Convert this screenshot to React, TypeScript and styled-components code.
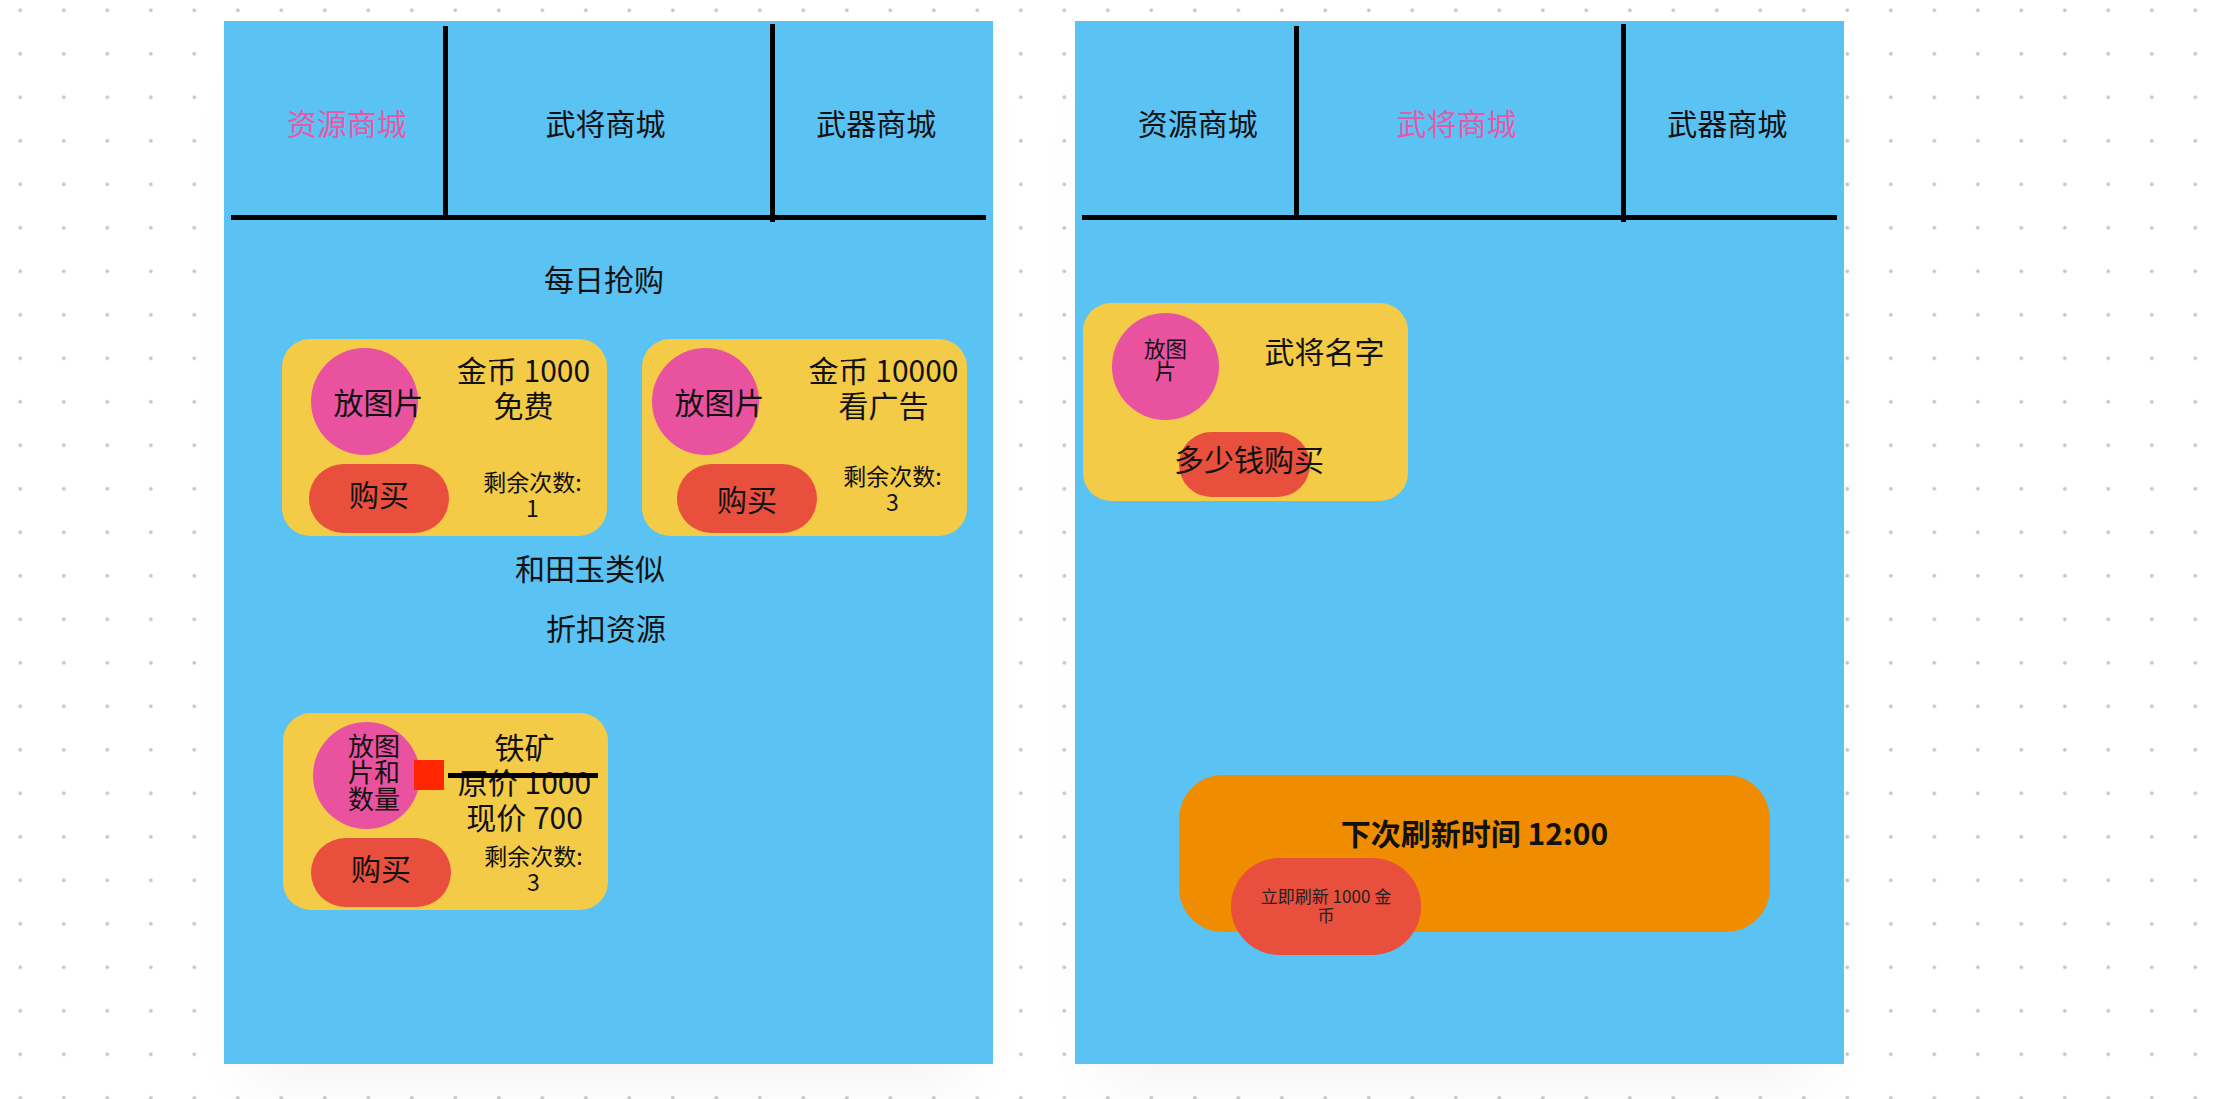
import React from 'react';
import styled, { createGlobalStyle } from 'styled-components';

const GlobalStyle = createGlobalStyle`
  html, body {
    margin: 0;
    padding: 0;
  }
  body {
    width: 2224px;
    height: 1099px;
    overflow: hidden;
    background-color: #ffffff;
    background-image: radial-gradient(circle, #c6c6c6 1.4px, transparent 2.2px);
    background-size: 43.5px 43.5px;
    background-position: -1.45px -11.45px;
    font-family: 'Noto Sans CJK SC', 'Noto Sans', sans-serif;
    color: #111;
  }
`;

const Page = styled.div`
  display: flex;
  gap: 82px;
  padding: 21px 0 0 224px;
`;

const Panel = styled.div`
  width: 769px;
  height: 1043px;
  flex: none;
  background: #5bc2f4;
  display: flex;
  flex-direction: column;
  box-shadow: 0 40px 60px -24px rgba(0, 0, 0, 0.05);
`;

/* ---------- tabs ---------- */

const TabBar = styled.div`
  display: flex;
  align-items: flex-start;
  height: 194px;
  margin: 0 7px;
  border-bottom: 5px solid #000;
  flex: none;
`;

const Tab = styled.div<{ $w: number; $shift: number; $active?: boolean }>`
  width: ${(p) => p.$w}px;
  height: 100%;
  flex: none;
  box-sizing: border-box;
  display: flex;
  align-items: center;
  justify-content: center;
  padding-top: 8px;
  padding-left: ${(p) => Math.max(0, p.$shift * 2)}px;
  padding-right: ${(p) => Math.max(0, -p.$shift * 2)}px;
  font-size: 30px;
  white-space: nowrap;
  color: ${(p) => (p.$active ? '#e45aa8' : '#111')};
`;

const TabDivider = styled.div<{ $top: number; $h: number }>`
  width: 5px;
  flex: none;
  background: #000;
  margin-top: ${(p) => p.$top}px;
  height: ${(p) => p.$h}px;
`;

const tabs = ['资源商城', '武将商城', '武器商城'];

const Tabs = ({ active }: { active: number }) => (
  <TabBar>
    <Tab $w={211.5} $shift={10} $active={active === 0}>
      {tabs[0]}
    </Tab>
    <TabDivider $top={5} $h={189} />
    <Tab $w={322} $shift={-3} $active={active === 1}>
      {tabs[1]}
    </Tab>
    <TabDivider $top={3} $h={198} />
    <Tab $w={211.5} $shift={-4} $active={active === 2}>
      {tabs[2]}
    </Tab>
  </TabBar>
);

/* ---------- resource shop ---------- */

const SectionTitle = styled.div<{ $top: number; $dx: number }>`
  margin-top: ${(p) => p.$top}px;
  padding-right: ${(p) => -p.$dx * 2}px;
  font-size: 30px;
  line-height: 40px;
  text-align: center;
`;

const CardRow = styled.div<{ $top: number; $left: number }>`
  display: flex;
  gap: 35px;
  margin-top: ${(p) => p.$top}px;
  padding-left: ${(p) => p.$left}px;
`;

const Card = styled.div`
  width: 325px;
  height: 197px;
  flex: none;
  border-radius: 28px;
  background: #f4cb46;
  display: flex;
  position: relative;
`;

const Side = styled.div`
  width: 176px;
  flex: none;
  box-sizing: border-box;
  padding: 9px 0 3px;
  display: flex;
  flex-direction: column;
  justify-content: space-between;
`;

const Photo = styled.div<{ $x: number; $pl?: number; $pb?: number }>`
  width: 107px;
  height: 107px;
  flex: none;
  box-sizing: border-box;
  border-radius: 50%;
  background: #e9529f;
  margin-left: ${(p) => p.$x}px;
  padding-left: ${(p) => p.$pl || 0}px;
  padding-bottom: ${(p) => p.$pb || 0}px;
  display: flex;
  align-items: center;
  justify-content: center;
`;

const PhotoLabel = styled.div<{ $size: number; $w?: number }>`
  flex: none;
  font-size: ${(p) => p.$size}px;
  line-height: ${(p) => (p.$w ? 1.02 : 1.3)};
  text-align: center;
  width: ${(p) => (p.$w ? `${p.$w}px` : 'auto')};
  white-space: ${(p) => (p.$w ? 'normal' : 'nowrap')};
  word-break: break-all;
`;

const BuyButton = styled.div<{ $x: number; $lift: number }>`
  width: 140px;
  height: 69px;
  flex: none;
  box-sizing: border-box;
  margin-left: ${(p) => p.$x}px;
  padding-bottom: ${(p) => p.$lift * 2}px;
  border-radius: 35px;
  background: #e84f3d;
  display: flex;
  align-items: center;
  justify-content: center;
  font-size: 30px;
`;

const Info = styled.div<{ $pt: number; $pb: number }>`
  flex: 1;
  min-width: 0;
  display: flex;
  flex-direction: column;
  align-items: center;
  padding: ${(p) => p.$pt}px 0 ${(p) => p.$pb}px;
  text-align: center;
`;

const InfoLines = styled.div`
  padding-right: 18px;
  font-size: 30px;
  line-height: 35px;
  white-space: nowrap;
`;

const Struck = styled.div`
  position: relative;
  &::after {
    content: '';
    position: absolute;
    left: -10px;
    right: -7px;
    top: calc(50% - 8px);
    height: 5px;
    background: #000;
  }
`;

const Remain = styled.div`
  margin-top: auto;
  font-size: 23px;
  line-height: 26px;
  white-space: nowrap;
`;

const Marker = styled.div`
  position: absolute;
  left: 131px;
  top: 47px;
  width: 30px;
  height: 30px;
  background: #ff2600;
`;

type ShopCardProps = {
  photoX: number;
  buyX: number;
  lift: number;
  remainBottom: number;
  times: number;
  lines: string[];
};

const daily: ShopCardProps[] = [
  { photoX: 29, buyX: 27, lift: 5.5, remainBottom: 16, times: 1, lines: ['金币 1000', '免费'] },
  { photoX: 10, buyX: 35, lift: 1, remainBottom: 22, times: 3, lines: ['金币 10000', '看广告'] },
];

const ShopCard = ({ photoX, buyX, lift, remainBottom, times, lines }: ShopCardProps) => (
  <Card>
    <Side>
      <Photo $x={photoX} $pl={28}>
        <PhotoLabel $size={30}>放图片</PhotoLabel>
      </Photo>
      <BuyButton $x={buyX} $lift={lift}>
        购买
      </BuyButton>
    </Side>
    <Info $pt={13} $pb={remainBottom}>
      <InfoLines>
        {lines.map((l) => (
          <div key={l}>{l}</div>
        ))}
      </InfoLines>
      <Remain>
        剩余次数:
        <br />
        {times}
      </Remain>
    </Info>
  </Card>
);

const DiscountCard = () => (
  <Card>
    <Side>
      <Photo $x={30} $pl={15} $pb={7}>
        <PhotoLabel $size={26} $w={54}>
          放图片和数量
        </PhotoLabel>
      </Photo>
      <BuyButton $x={28} $lift={5.5}>
        购买
      </BuyButton>
    </Side>
    <Info $pt={16} $pb={16}>
      <InfoLines>
        <div>铁矿</div>
        <Struck>原价 1000</Struck>
        <div>现价 700</div>
      </InfoLines>
      <Remain>
        剩余次数:
        <br />3
      </Remain>
    </Info>
    <Marker />
  </Card>
);

/* ---------- hero shop ---------- */

const HeroCard = styled.div`
  width: 325px;
  height: 198px;
  flex: none;
  margin: 83px 0 0 8px;
  border-radius: 28px;
  background: #f4cb46;
  display: flex;
  flex-direction: column;
`;

const HeroTop = styled.div`
  display: flex;
  padding-top: 10px;
`;

const HeroName = styled.div`
  flex: 1;
  padding: 17px 0 0 22px;
  font-size: 30px;
  line-height: 40px;
  text-align: center;
  white-space: nowrap;
`;

const HeroBuy = styled.div`
  width: 131px;
  height: 65px;
  margin: 12px 0 0 96px;
  border-radius: 33px;
  background: #e84f3d;
  display: flex;
  align-items: center;
  justify-content: center;
  padding: 0 0 13px 9px;
  box-sizing: border-box;
  font-size: 30px;
  white-space: nowrap;
`;

const RefreshBox = styled.div`
  width: 591px;
  height: 157px;
  flex: none;
  margin: 274px 0 0 104px;
  border-radius: 44px;
  background: #ef8c00;
  display: flex;
  flex-direction: column;
`;

const RefreshTitle = styled.div`
  margin-top: 37px;
  font-size: 30px;
  font-weight: 600;
  line-height: 40px;
  text-align: center;
`;

const RefreshButton = styled.div`
  width: 190px;
  height: 97px;
  flex: none;
  margin: 6px 0 0 52px;
  padding: 0 25px 4px;
  box-sizing: border-box;
  border-radius: 49px;
  background: #e84f3d;
  display: flex;
  align-items: center;
  justify-content: center;
  text-align: center;
  font-size: 17px;
  line-height: 19px;
  color: #222;
`;

const App = () => {
  return (
    <>
      <GlobalStyle />
      <Page>
        <Panel>
          <Tabs active={0} />
          <SectionTitle $top={38} $dx={-4.5}>
            每日抢购
          </SectionTitle>
          <CardRow $top={41} $left={58}>
            {daily.map((c, i) => (
              <ShopCard key={i} {...c} />
            ))}
          </CardRow>
          <SectionTitle $top={11} $dx={-18.5}>
            和田玉类似
          </SectionTitle>
          <SectionTitle $top={20} $dx={-2.5}>
            折扣资源
          </SectionTitle>
          <CardRow $top={65.5} $left={59}>
            <DiscountCard />
          </CardRow>
        </Panel>

        <Panel>
          <Tabs active={1} />
          <HeroCard>
            <HeroTop>
              <Photo $x={29} $pb={15}>
                <PhotoLabel $size={21.5} $w={46}>
                  放图片
                </PhotoLabel>
              </Photo>
              <HeroName>武将名字</HeroName>
            </HeroTop>
            <HeroBuy>多少钱购买</HeroBuy>
          </HeroCard>
          <RefreshBox>
            <RefreshTitle>下次刷新时间 12:00</RefreshTitle>
            <RefreshButton>立即刷新 1000 金币</RefreshButton>
          </RefreshBox>
        </Panel>
      </Page>
    </>
  );
};

export default App;
